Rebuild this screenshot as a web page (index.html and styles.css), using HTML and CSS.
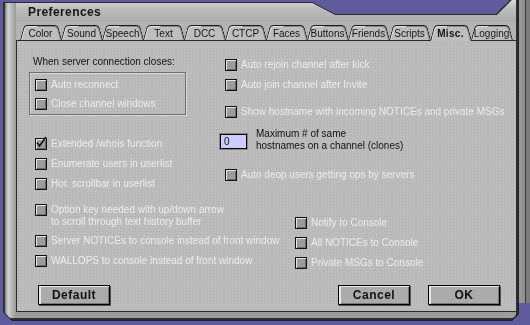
FILE: index.html
```html
<!DOCTYPE html>
<html lang="en">
<head>
    <meta charset="UTF-8">
    <title>Preferences</title>
    <link rel="stylesheet" href="styles.css">
</head>
<body>
    <div class="backwin"></div>
    <div class="shell">
        <div class="window">
            <div class="titlebar"><span class="title">Preferences</span></div>
            <div class="tabs">
                <div class="tab">Color</div>
                <div class="tab">Sound</div>
                <div class="tab">Speech</div>
                <div class="tab">Text</div>
                <div class="tab">DCC</div>
                <div class="tab">CTCP</div>
                <div class="tab">Faces</div>
                <div class="tab">Buttons</div>
                <div class="tab">Friends</div>
                <div class="tab">Scripts</div>
                <div class="tab active">Misc.</div>
                <div class="tab">Logging</div>
            </div>
            <div class="panel">
                <div class="columns">
                    <div class="col col-left">
                        <div class="heading">When server connection closes:</div>
                        <div class="group">
                            <div class="check"><span class="box"></span>Auto reconnect</div>
                            <div class="check"><span class="box"></span>Close channel windows</div>
                        </div>
                        <div class="check first-after-group">
                            <span class="box">
                                <svg width="12" height="12" viewBox="0 0 12 12"><polyline points="2,5.5 4.5,9 11,0" fill="none" stroke="#111" stroke-width="1.6"/></svg>
                            </span>Extended /whois function
                        </div>
                        <div class="check">
                            <span class="box"></span>Enumerate users in userlist
                        </div>
                        <div class="check"><span class="box"></span>Hor. scrollbar in userlist</div>
                        <div class="check two-line">
                            <span class="box"></span>
                            <span>Option key needed with up/down arrow<br>to scroll through text history buffer</span>
                        </div>
                        <div class="check after-two"><span class="box"></span>Server NOTICEs to console instead of front window</div>
                        <div class="check"><span class="box"></span>WALLOPS to console instead of front window</div>
                    </div>
                    <div class="col col-right">
                        <div class="check top-row"><span class="box"></span>Auto rejoin channel after kick</div>
                        <div class="check"><span class="box"></span>Auto join channel after Invite</div>
                        <div class="check spaced"><span class="box"></span>Show hostname with incoming NOTICEs and private MSGs</div>
                        <div class="clones">
                            <div class="field"><div class="field-in">0</div></div>
                            <div class="clones-text">Maximum # of same<br>hostnames on a channel (clones)</div>
                        </div>
                        <div class="check deop"><span class="box"></span>Auto deop users getting ops by servers</div>
                        <div class="console">
                            <div class="check"><span class="box"></span>Notify to Console</div>
                            <div class="check"><span class="box"></span>All NOTICEs to Console</div>
                            <div class="check"><span class="box"></span>Private MSGs to Console</div>
                        </div>
                    </div>
                </div>
                <div class="buttons">
                    <div class="btn">Default</div>
                    <div class="btn btn-cancel">Cancel</div>
                    <div class="btn">OK</div>
                </div>
            </div>
        </div>
    </div>
</body>
</html>
```

FILE: styles.css
```css
body {
    margin: 0;
    width: 530px;
    height: 325px;
    overflow: hidden;
    position: relative;
    background: #5f5b9d;
    font-family: "Liberation Sans", Arial, sans-serif;
    font-size: 10px;
    color: #111;
}

/* strip of the window lying behind */
.backwin {
    position: absolute;
    left: 516px;
    top: 0;
    width: 14px;
    height: 303px;
    background: linear-gradient(to right, #333 0, #333 2px, #9c9c9c 2px, #8e8e8e 9px, #3a3a3a 9px, #3a3a3a 10px, #7c7c7c 10px);
}

.shell {
    position: relative;
    z-index: 1;
    margin-left: 4px;
    width: 514px;
    filter: drop-shadow(0 -1px 0 #2b2b2b) drop-shadow(-1px 0 0 #2b2b2b) drop-shadow(1px 1px 0 #222);
}

.window {
    box-sizing: border-box;
    width: 514px;
    height: 320px;
    padding-left: 11px;
    border-left: 1px solid #3a3a3a;
    border-right: 2px solid #2e2e2e;
    border-bottom: 2px solid #2e2e2e;
    background: linear-gradient(to right, #7a7a7a 0, #d2d2d2 3px, #b4b4b4 7px, #9c9c9c 11px);
    clip-path: polygon(0 3px, 308px 3px, 331px 15px, 493px 15px, 508px 0, 100% 0, 100% calc(100% - 7px), calc(100% - 7px) 100%, 8px 100%, 0 calc(100% - 8px));
}

.titlebar {
    height: 22px;
    box-sizing: border-box;
    padding: 3px 0 0 12px;
    background: linear-gradient(#dadada, #bdbdbd 8px, #acacac);
}

.title {
    font-weight: bold;
    font-size: 12px;
    letter-spacing: 0.4px;
    line-height: 19px;
    color: #151515;
}

.tabs {
    position: relative;
    z-index: 2;
    display: flex;
    align-items: flex-end;
    height: 18px;
    padding-left: 4px;
    background: #b3b3b3;
}

.tab {
    position: relative;
    z-index: 0;
    width: 41px;
    height: 15px;
    box-sizing: border-box;
    padding-top: 3px;
    text-align: center;
    line-height: 12px;
    color: #151515;
    white-space: nowrap;
}

.tab::before,
.tab::after {
    content: '';
    position: absolute;
    top: 0;
    bottom: 0;
    z-index: -1;
    background: #bebebe;
    border-top: 1px solid #1a1a1a;
}

.tab::before {
    left: 0;
    right: 50%;
    border-left: 1px solid #1a1a1a;
    border-top-left-radius: 4px;
    box-shadow: inset 1px 1px 0 #e2e2e2;
    transform: skewX(-15deg);
    transform-origin: 0 100%;
}

.tab::after {
    left: 50%;
    right: 0;
    border-right: 1px solid #1a1a1a;
    border-top-right-radius: 4px;
    box-shadow: inset -1px 1px 0 #8c8c8c, inset 0 2px 0 -1px #e2e2e2;
    transform: skewX(15deg);
    transform-origin: 100% 100%;
}

.tab.active {
    z-index: 1;
    height: 16px;
    margin-bottom: -1px;
    font-weight: bold;
    letter-spacing: 0.3px;
}

.panel {
    border-top: 1px solid #2a2a2a;
    border-left: 1px solid #2a2a2a;
    border-bottom: 1px solid #2a2a2a;
    background-color: #bcbcbc;
    background-image: radial-gradient(circle, rgba(0, 0, 0, 0.07) 0.7px, transparent 0.9px);
    background-size: 3px 3px;
    padding-bottom: 6px;
}

.columns {
    display: flex;
    height: 228px;
    padding-top: 14px;
    box-sizing: border-box;
}

.col {
    display: flex;
    flex-direction: column;
    gap: 7px;
}

.col-left {
    width: 190px;
    padding-left: 12px;
    flex-shrink: 0;
}

.col-right {
    flex: 1;
}

.heading {
    line-height: 13px;
    padding-left: 4px;
    margin-bottom: -3px;
}

.group {
    width: 157px;
    box-sizing: border-box;
    border: 1px solid #6e6e6e;
    box-shadow: 1px 1px 0 #d8d8d8, inset 1px 1px 0 #d8d8d8;
    padding: 5px 0 4px 5px;
    display: flex;
    flex-direction: column;
    gap: 6px;
}

.check {
    display: flex;
    align-items: center;
    gap: 4px;
    height: 13px;
    line-height: 13px;
    color: #ededed;
    white-space: nowrap;
}

.col > .check {
    padding-left: 6px;
}

.box {
    flex-shrink: 0;
    width: 12px;
    height: 12px;
    box-sizing: border-box;
    border: 1px solid #111;
    background: #9c9c9c;
    box-shadow: inset 1px 1px 0 #e6e6e6, inset -1px -1px 0 #6a6a6a;
}

.box svg {
    display: block;
    margin: -2px 0 0 -1px;
    overflow: visible;
}

.first-after-group {
    margin-top: 15px;
}

.two-line {
    align-items: flex-start;
    height: 24px;
    line-height: 12px;
    margin-top: 7px;
}

.after-two {
    margin-top: -1px;
}

.top-row {
    margin-top: 3px;
}

.spaced {
    margin-top: 7px;
}

.clones {
    display: flex;
    align-items: flex-start;
    margin-top: 3px;
}

.field {
    width: 29px;
    height: 17px;
    box-sizing: border-box;
    margin-top: 5px;
    border: 1px solid #858585;
}

.field-in {
    height: 100%;
    box-sizing: border-box;
    border: 1px solid #000;
    background: #ccccff;
    padding-left: 3px;
    line-height: 13px;
    color: #111;
}

.clones-text {
    margin-left: 8px;
    line-height: 12px;
}

.deop {
    margin-top: 9px;
}

.console {
    margin-top: 28px;
    padding-left: 76px;
    display: flex;
    flex-direction: column;
    gap: 7px;
}

.buttons {
    display: flex;
    gap: 18px;
    margin-top: 16px;
    padding: 0 16px 0 21px;
}

.btn {
    width: 72px;
    height: 20px;
    box-sizing: border-box;
    border: 1px solid #000;
    background: #ababab;
    box-shadow: inset 2px 1px 0 #e8e8e8, inset -1px -1px 0 #777, 1px 1px 0 #555;
    text-align: center;
    line-height: 18px;
    font-weight: bold;
    font-size: 12px;
    letter-spacing: 0.5px;
    color: #111;
}

.btn-cancel {
    margin-left: auto;
}
```
